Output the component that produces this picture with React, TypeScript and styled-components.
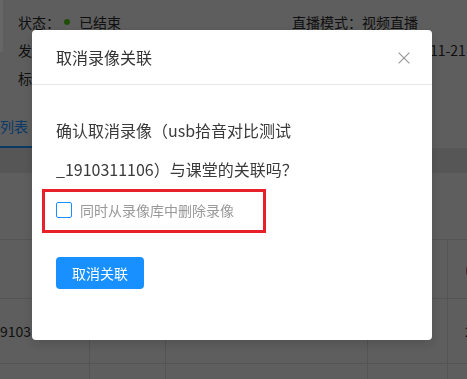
import React from 'react';
import styled, { createGlobalStyle } from 'styled-components';

const GlobalStyle = createGlobalStyle`
  html, body {
    margin: 0;
    padding: 0;
  }

  body {
    font-family: 'Noto Sans CJK SC', 'Noto Sans', sans-serif;
    background: #ebebeb;
  }

  * {
    box-sizing: border-box;
  }
`;

const COLUMNS = '89px 76px 202px 80px 1fr';

function CloseIcon() {
  return (
    <svg width="12" height="12" viewBox="0 0 12 12" fill="none">
      <path d="M0.6 0.6L11.4 11.4M11.4 0.6L0.6 11.4" stroke="#999" strokeWidth="1.2" />
    </svg>
  );
}

function App() {
  return (
    <>
      <GlobalStyle />
      <Page>
        <InfoSection>
          <InfoRow>
            <InfoCell>
              状态：<StatusDot />
              已结束
            </InfoCell>
            <InfoCell>直播模式：视频直播</InfoCell>
          </InfoRow>
          <InfoRow>
            <InfoCell>发布人：张老师</InfoCell>
            <InfoCell $indent={4}>直播开始时间：2019-11-21 14:00</InfoCell>
          </InfoRow>
          <InfoRow>
            <InfoCell>标签：公开课</InfoCell>
            <InfoCell />
          </InfoRow>
        </InfoSection>

        <TabBar>
          <TabItem $active>列表</TabItem>
        </TabBar>
        <TabGap />

        <Table>
          <HeadRow />
          <Row $height={59}>
            <Cell />
            <Cell />
            <Cell />
            <Cell />
            <Cell>
              <Accent>(</Accent>
            </Cell>
          </Row>
          <Row $height={65}>
            <Cell>9103</Cell>
            <Cell />
            <Cell />
            <Cell />
            <Cell>2019-11-21</Cell>
          </Row>
          <Row $height={40}>
            <Cell />
            <Cell />
            <Cell />
            <Cell />
            <Cell />
          </Row>
        </Table>

        <Mask />
        <ModalWrap>
          <Modal role="dialog">
            <ModalHeader>
              <ModalTitle>取消录像关联</ModalTitle>
              <CloseButton type="button" aria-label="关闭">
                <CloseIcon />
              </CloseButton>
            </ModalHeader>
            <ModalBody>
              <Message>
                确认取消录像（usb拾音对比测试
                <br />
                _1910311106）与课堂的关联吗？
              </Message>
              <Highlight>
                <CheckLabel>
                  <CheckBox />
                  同时从录像库中删除录像
                </CheckLabel>
              </Highlight>
              <PrimaryButton type="button">取消关联</PrimaryButton>
            </ModalBody>
          </Modal>
        </ModalWrap>
      </Page>
    </>
  );
}

export default App;

const Page = styled.div`
  position: relative;
  width: 467px;
  height: 379px;
  overflow: hidden;
  background: #ebebeb;
  color: #2a2a2a;
  font-size: 14px;
`;

const InfoSection = styled.section`
  position: relative;
  padding: 8px 0 0 18px;
  height: 100px;

  &::before {
    content: '';
    position: absolute;
    left: -2px;
    top: -6px;
    width: 5px;
    height: 58px;
    border-radius: 3px;
    background: #fff;
  }
`;

const InfoRow = styled.div`
  display: grid;
  grid-template-columns: 274px 1fr;
  height: 28px;
  line-height: 28px;
  white-space: nowrap;
`;

const InfoCell = styled.div<{ $indent?: number }>`
  display: flex;
  align-items: center;
  padding-left: ${(p) => p.$indent ?? 0}px;
`;

const StatusDot = styled.span`
  width: 6px;
  height: 6px;
  margin: 0 9px 0 4px;
  border-radius: 50%;
  background: #52c41a;
`;

const TabBar = styled.div`
  display: flex;
  height: 49px;
  border-bottom: 1px solid #dcdcdc;
`;

const TabItem = styled.div<{ $active?: boolean }>`
  display: flex;
  align-items: center;
  padding: 6px 4px 0 0;
  width: 32px;
  color: ${(p) => (p.$active ? '#1890ff' : '#333')};
  border-bottom: 2px solid ${(p) => (p.$active ? '#1890ff' : 'transparent')};
`;

const TabGap = styled.div`
  height: 24px;
  background: #d8d8d8;
`;

const Table = styled.div`
  display: flex;
  flex-direction: column;
`;

const HeadRow = styled.div`
  height: 67px;
  border-bottom: 1px solid #d2d2d2;
`;

const Row = styled.div<{ $height: number }>`
  display: grid;
  grid-template-columns: ${COLUMNS};
  height: ${(p) => p.$height}px;
  border-bottom: 1px solid #d2d2d2;
`;

const Cell = styled.div`
  display: flex;
  align-items: center;
  padding-left: 15px;
  white-space: nowrap;
  overflow: hidden;
  border-left: 1px solid #d2d2d2;

  &:first-child {
    padding-left: 0;
    border-left: none;
  }

  &:last-child {
    padding-left: 17px;
  }
`;

const Accent = styled.span`
  color: #5a1f6e;
`;

const Mask = styled.div`
  position: fixed;
  inset: 0;
  background: rgba(0, 0, 0, 0.6);
`;

const ModalWrap = styled.div`
  position: fixed;
  inset: 0;
  display: flex;
  align-items: flex-start;
  padding: 30px 0 0 32px;
`;

const Modal = styled.div`
  width: 400px;
  background: #fff;
  border-radius: 4px;
  box-shadow: 0 4px 12px rgba(0, 0, 0, 0.15);
`;

const ModalHeader = styled.div`
  display: flex;
  align-items: center;
  justify-content: space-between;
  height: 55px;
  padding: 0 22px 0 24px;
  border-bottom: 1px solid #e8e8e8;
`;

const ModalTitle = styled.h3`
  margin: 0;
  font-size: 16px;
  font-weight: 400;
  line-height: 24px;
  color: #333;
`;

const CloseButton = styled.button`
  display: flex;
  padding: 0;
  margin-top: 2px;
  border: none;
  background: transparent;
  cursor: pointer;
`;

const ModalBody = styled.div`
  display: flex;
  flex-direction: column;
  align-items: flex-start;
  padding: 26px 24px 51px;
`;

const Message = styled.p`
  margin: 0;
  font-size: 16px;
  line-height: 39px;
  color: #3a3a3a;
  white-space: nowrap;
`;

const Highlight = styled.div`
  width: 224px;
  height: 44px;
  margin-left: -14px;
  padding: 10px 0 0 11px;
  border: 3px solid #e8202a;
`;

const CheckLabel = styled.label`
  display: flex;
  align-items: center;
  gap: 8px;
  height: 16px;
  font-size: 14px;
  line-height: 16px;
  color: #999;
  cursor: pointer;
`;

const CheckBox = styled.span`
  width: 16px;
  height: 16px;
  border: 1px solid #1890ff;
  border-radius: 2px;
  background: #fff;
`;

const PrimaryButton = styled.button`
  height: 32px;
  margin-top: 24px;
  padding: 0 16px;
  border: none;
  border-radius: 4px;
  background: #1890ff;
  color: #fff;
  font-family: inherit;
  font-size: 14px;
  cursor: pointer;
`;
